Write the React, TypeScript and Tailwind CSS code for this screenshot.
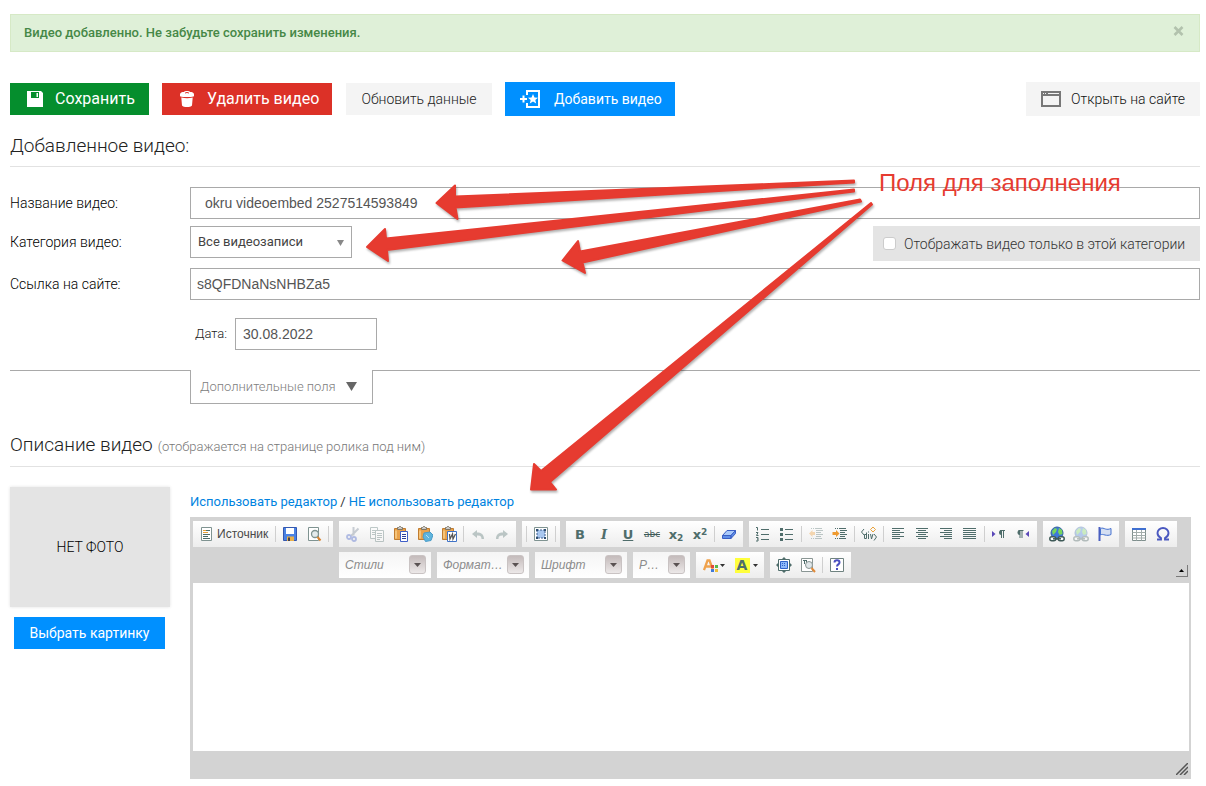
import React from "react";

const ink = "#4f6d6b";

type IconProps = { children: React.ReactNode; faded?: boolean };

function Icon({ children, faded }: IconProps) {
  return (
    <svg width="16" height="16" viewBox="0 0 16 16" fill="none" className={faded ? "opacity-35" : ""} aria-hidden="true">
      {children}
    </svg>
  );
}

function Tool({ label, children, faded }: { label: string } & IconProps) {
  return (
    <button type="button" aria-label={label} className="flex h-[22px] w-6 shrink-0 items-center justify-center">
      <Icon faded={faded}>{children}</Icon>
    </button>
  );
}

function Sep() {
  return (
    <span className="flex w-[5px] shrink-0 justify-center">
      <span className="h-4 w-px bg-[#cfcfcf]" />
    </span>
  );
}

function Group({ children }: { children: React.ReactNode }) {
  return (
    <div className="flex h-[26px] shrink-0 items-center bg-linear-to-b from-white to-[#ededed] px-[2px]">{children}</div>
  );
}

function Combo({ label, narrow }: { label: string; narrow?: boolean }) {
  return (
    <div className={`relative h-[26px] shrink-0 bg-linear-to-b from-[#f5f5f5] to-white ${narrow ? "w-[57px]" : "w-[92px]"}`}>
      <select
        aria-label={label}
        className={`h-full w-full appearance-none pl-[6px] font-['Liberation_Sans',sans-serif] text-[12px] text-ellipsis text-[#8c8c8c] italic ${narrow ? "pr-7" : "pr-6"}`}
      >
        <option>{label}</option>
      </select>
      <span className="pointer-events-none absolute top-[3px] right-[5px] flex h-[19px] w-[17px] items-center justify-center rounded-[3px] border border-[#c9c3c3] bg-linear-to-b from-[#c4bbbb] to-[#ece8e8]">
        <svg width="7" height="4" viewBox="0 0 7 4" aria-hidden="true">
          <path d="M0 0h7L3.5 4z" fill="#5a5252" />
        </svg>
      </span>
    </div>
  );
}

function Clipboard() {
  return (
    <>
      <path d="M1.5 2.5h11v11h-11z" fill="#e9a24a" stroke="#c07c30" />
      <path d="M3 4.500v8" stroke="#f9cf8b" strokeWidth="1.5" />
      <path d="M4.500 3.500v-2h1l1-1h1l1 1h1v2z" fill="#c8c8c8" stroke="#7f7460" />
    </>
  );
}

function Lines({ rows }: { rows: [number, number][] }) {
  return (
    <>
      {rows.map(([x, w], i) => (
        <path key={i} d={`M${x} ${2.5 + i * 2}h${w}`} stroke={ink} />
      ))}
    </>
  );
}

function Globe() {
  return (
    <>
      <circle cx="8" cy="7" r="6" fill="#3f78d8" stroke="#2f5f9f" />
      <path d="M3 5l3-3 2 1-1 3-3 3zM10 2l3 2 .5 4-3 1-1.5-3z" fill="#79d65c" />
      <rect x=".8" y="10.8" width="6" height="4" rx="2" fill="#fff" stroke="#3f5a58" strokeWidth="1.5" />
      <rect x="9.2" y="10.8" width="6" height="4" rx="2" fill="#fff" stroke="#3f5a58" strokeWidth="1.5" />
      <path d="M4 12.8h8" stroke="#3f5a58" strokeWidth="1.5" />
    </>
  );
}

function Caret() {
  return (
    <svg width="5" height="3" viewBox="0 0 5 3" aria-hidden="true">
      <path d="M0 0h5L2.5 3z" fill="#333" />
    </svg>
  );
}

const letter = "font-['DejaVu_Sans',sans-serif] leading-none font-bold text-[#4f6d6b]";

function TextTool({ label, className, children }: { label: string; className: string; children: React.ReactNode }) {
  return (
    <button type="button" aria-label={label} className={`flex h-[22px] w-6 shrink-0 items-center justify-center ${className}`}>
      {children}
    </button>
  );
}

function FirstRow() {
  return (
    <div className="flex gap-[6px]">
      <Group>
        <Tool label="Вырезать" faded>
          <path d="M8.5 1v8.5M13.5 2.5L6 10" stroke="#6d7b8d" strokeWidth="2" />
          <circle cx="4" cy="11" r="2" stroke="#3453c4" strokeWidth="1.8" />
          <circle cx="9" cy="13" r="2" stroke="#3453c4" strokeWidth="1.8" />
        </Tool>
        <Tool label="Копировать" faded>
          <path d="M1.5 1.5h7v11h-7z" fill="#fff" stroke={ink} />
          <path d="M3 4.5h4M3 6.5h4M3 8.5h4" stroke={ink} />
          <path d="M6.5 4.5h8v11h-8z" fill="#fff" stroke={ink} />
          <path d="M8 7.5h5M8 9.5h5M8 11.5h5M8 13.5h3" stroke={ink} />
        </Tool>
        <Tool label="Вставить">
          <Clipboard />
          <path d="M7.5 5.5h7v10h-7z" fill="#fff" stroke="#3f5fc8" />
          <path d="M9 8.5h4M9 10.5h4M9 12.5h4" stroke="#2d3f9a" />
        </Tool>
        <Tool label="Вставить текст">
          <Clipboard />
          <path d="M7 7l6-1 3 3-2 5.5-5.500 1L6 11z" fill="#5fb4dc" stroke="#4a9cc8" />
          <path d="M9 9l3 3" stroke="#b4e2f4" />
        </Tool>
        <Tool label="Вставить из Word">
          <Clipboard />
          <path d="M6.5 5.5h9v10h-9z" fill="#fff" stroke="#3f73c8" />
          <path d="M8.500 8l.5 5L11.500 8l.5 5L14.500 8" stroke="#555" strokeWidth="1.3" />
        </Tool>
        <Sep />
        <Tool label="Отменить" faded>
          <path d="M2 8l5-4v2.500c4 0 7 1.500 7 6.500h-2.500c0-3-1.500-3.500-4.500-3.500V12z" fill={ink} />
        </Tool>
        <Tool label="Повторить" faded>
          <path d="M14 8L9 4v2.500c-4 0-7 1.500-7 6.500h2.500c0-3 1.500-3.500 4.500-3.500V12z" fill={ink} />
        </Tool>
      </Group>
      <Group>
        <Sep />
        <Tool label="Выделить все">
          <path d="M1.5 1.5h13v13h-13z" fill="#fff" stroke="#7f9391" />
          <path d="M4 4h8v8H4z" fill="#a9c8f0" stroke="#3f5f8f" strokeDasharray="2 1" />
          <path d="M3 3h2v2H3zM11 3h2v2h-2zM3 11h2v2H3zM11 11h2v2h-2z" fill="#2f4f6f" />
        </Tool>
        <Sep />
      </Group>
      <Group>
        <TextTool label="Полужирный" className={`${letter} text-[13px]`}>B</TextTool>
        <TextTool label="Курсив" className="font-['DejaVu_Serif',serif] text-[13px] leading-none font-bold text-[#4f6d6b] italic">I</TextTool>
        <TextTool label="Подчеркнутый" className={`${letter} text-[13px] underline`}>U</TextTool>
        <TextTool label="Зачеркнутый" className="font-['DejaVu_Sans',sans-serif] text-[9px] leading-none font-normal text-[#3f5a58] line-through">abc</TextTool>
        <TextTool label="Подстрочный" className={`${letter} text-[13px]`}>
          <span>x</span>
          <span className="pt-2 text-[9px]">2</span>
        </TextTool>
        <TextTool label="Надстрочный" className={`${letter} text-[13px]`}>
          <span>x</span>
          <span className="pb-1 text-[9px]">2</span>
        </TextTool>
        <Sep />
        <Tool label="Убрать форматирование">
          <path d="M6 4.5h8.500L10 9.5H1.500z" fill="#a9c9fa" stroke="#3a5ec4" />
          <path d="M1.500 9.500H10v3H1.500zM10 9.500l4.500-5v3l-4.500 5z" fill="#5f8fe8" stroke="#3a5ec4" />
        </Tool>
      </Group>
      <Group>
        <Tool label="Нумерованный список">
          <path d="M1 1.5h1.500v3M1 6.5h2L1.500 9.500H3.500M1 11.500h2v1.500H2M3 13v2H1" stroke={ink} />
          <path d="M6 3.5h8M6 8.5h8M6 13.5h8" stroke={ink} />
        </Tool>
        <Tool label="Маркированный список">
          <path d="M1 2h3v3H1zM1 7h3v3H1zM1 12h3v3H1z" fill={ink} />
          <path d="M6 3.5h8M6 8.5h8M6 13.5h8" stroke={ink} />
        </Tool>
        <Sep />
        <Tool label="Уменьшить отступ" faded>
          <path d="M1 7.5L4.500 4v2H7v3H4.500v2z" fill="#ee9a2f" />
          <path d="M3 2.500h1m1 0h1m1 0h7M8 4.500h7M8 6.500h5M8 8.500h7M8 10.500h5M3 12.500h1m1 0h1m1 0h7" stroke={ink} />
        </Tool>
        <Tool label="Увеличить отступ">
          <path d="M7.500 7.500L4 4v2H.5v3H4v2z" fill="#ee9a2f" />
          <path d="M3 2.500h1m1 0h1m1 0h7M8 4.500h7M8 6.500h5M8 8.500h7M8 10.500h5M3 12.500h1m1 0h1m1 0h7" stroke={ink} />
        </Tool>
        <Sep />
        <Tool label="Контейнер div">
          <path d="M3 3L.5 6 3 9M5.500 6.500v6h-2v-4h2M7.500 8v5M7.500 5.500v1M9.500 8l1 5 1.500-5M13 8l2.500 3-2.500 3.500" stroke={ink} />
          <path d="M12 1l2.500 2.500L12 6 9.500 3.500z" stroke="#e9a23a" />
        </Tool>
        <Sep />
        <Tool label="По левому краю"><Lines rows={[[2, 12], [2, 8], [2, 12], [2, 8], [2, 12], [2, 8]]} /></Tool>
        <Tool label="По центру"><Lines rows={[[2, 12], [4, 8], [2, 12], [4, 8], [2, 12], [4, 8]]} /></Tool>
        <Tool label="По правому краю"><Lines rows={[[2, 12], [6, 8], [2, 12], [6, 8], [2, 12], [6, 8]]} /></Tool>
        <Tool label="По ширине"><Lines rows={[[1, 13], [1, 13], [1, 13], [1, 13], [1, 13], [1, 13]]} /></Tool>
        <Sep />
        <Tool label="Слева направо">
          <path d="M1 5l3.500 3L1 11z" fill="#5a48b8" />
          <path d="M14 4.500H9M10.500 4v8M12.500 4v8" stroke={ink} />
          <path d="M10.500 4a2.500 2.500 0 0 0 0 5z" fill={ink} />
        </Tool>
        <Tool label="Справа налево">
          <path d="M14 5l-3.500 3 3.500 3z" fill="#5a48b8" />
          <path d="M8.500 4.500h-5M5 4v8M7 4v8" stroke={ink} />
          <path d="M5 4a2.500 2.500 0 0 0 0 5z" fill={ink} />
        </Tool>
      </Group>
      <Group>
        <Tool label="Вставить ссылку"><Globe /></Tool>
        <Tool label="Убрать ссылку" faded><Globe /></Tool>
        <Tool label="Якорь">
          <path d="M2.500 1v14" stroke="#4a5fc0" strokeWidth="2" />
          <path d="M3.500 2.500c2-1 3 0 5 .5s3 .5 5.500-.5v6c-2 1-4 1-6 .5s-3-1-4.500 0z" fill="#d5dff2" stroke="#4672d0" />
        </Tool>
      </Group>
      <Group>
        <Tool label="Таблица">
          <path d="M1.500 2.500h13v12h-13z" fill="#fff" stroke="#7f8f8d" />
          <path d="M1.500 6.500h13M1.500 9.500h13M1.500 12h13M5.500 4v10.500M10.500 4v10.500" stroke="#a3adab" />
          <path d="M1 3h14" stroke="#3f6fd0" strokeWidth="2" />
        </Tool>
        <Tool label="Специальный символ">
          <path d="M2 13.500h4v-1.500C3 10.500 2.500 8.500 2.500 7a5.500 5 0 0 1 11 0c0 1.500-.5 3.500-3.500 5v1.500h4" stroke="#4a58c0" strokeWidth="1.9" />
        </Tool>
      </Group>
    </div>
  );
}

function SecondRow() {
  return (
    <div className="flex gap-[6px]">
      <Combo label="Стили" />
      <Combo label="Форматирование" />
      <Combo label="Шрифт" />
      <Combo label="Размер" narrow />
      <Group>
        <button type="button" aria-label="Цвет текста" className="flex w-8 items-center justify-center gap-px">
          <Icon>
            <path d="M1 13L4.500 3.500H6.500L10 13M3 9.500h5.500" stroke="#efa24c" strokeWidth="2.3" />
            <path d="M8 8h3v3H8z" fill="#e04a3a" />
            <path d="M12 8h3v3h-3z" fill="#58b848" />
            <path d="M8 12h3v3H8z" fill="#3f78d8" />
            <path d="M12 12h3v3h-3z" fill="#f0c03a" />
          </Icon>
          <Caret />
        </button>
        <button type="button" aria-label="Цвет фона" className="flex w-8 items-center justify-center gap-[3px]">
          <span className={`flex h-[15px] w-[15px] items-center justify-center bg-[#ffff3c] text-[14px] ${letter}`}>A</span>
          <Caret />
        </button>
      </Group>
      <Group>
        <Tool label="Развернуть">
          <path d="M8 0l3 3H5zM8 16l3-3H5zM0 8l3-3v6zM16 8l-3-3v6z" fill={ink} />
          <path d="M2.500 2.500h11v11h-11z" fill="#fff" stroke={ink} />
          <path d="M4.500 4.500h7v7h-7z" fill="#8db8f8" stroke="#2f62c8" />
          <path d="M6 6.500h4M6 8.500h4" stroke="#2f62c8" strokeDasharray="1 1" />
        </Tool>
        <Tool label="Отображать блоки">
          <path d="M1.500 1.500h11v13h-11z" fill="#fff" stroke="#8a9694" />
          <path d="M3 3.500h4M4.500 3v4M6.500 3v4" stroke={ink} />
          <circle cx="9" cy="8" r="3.5" fill="#dfe6e8" stroke="#8a9694" />
          <path d="M11.500 11l3.500 4" stroke="#e08a3a" strokeWidth="2" />
        </Tool>
        <Sep />
        <Tool label="О редакторе">
          <path d="M1.500 1.500h13v13h-13z" fill="#fff" stroke="#6f8280" />
          <path d="M5.500 5.500c0-3 5-3 5 0 0 2-2.500 1.800-2.500 4M8 11v2" stroke="#4a4fc0" strokeWidth="2" />
        </Tool>
      </Group>
    </div>
  );
}

function Editor() {
  return (
    <div className="mr-[9px] bg-[#d3d3d3] pr-[2px] pl-[3px]">
      <div className="relative flex gap-[6px] pt-1 pb-[5px]">
        <Group>
          <button
            type="button"
            className="flex w-[78px] items-center gap-[2px] pl-1 font-['Liberation_Sans',sans-serif] text-[12px] font-normal text-[#484848]"
          >
            <Icon>
              <path d="M2.500 1.500h10v13h-10z" fill="#fff" stroke="#7f9391" />
              <path d="M4 4.500h3M4 6.500h5" stroke="#e9a23a" />
              <path d="M4 8.500h7M4 10.500h5M4 12.500h7M7 4.500h4" stroke={ink} />
            </Icon>
            Источник
          </button>
          <Sep />
          <Tool label="Сохранить текст">
            <path d="M1.500 1.500h13v13h-13z" fill="#4a82e4" stroke="#3458b0" />
            <path d="M4 2h8v6H4z" fill="#fff" />
            <path d="M5 10.500h7V15H5z" fill="#e9b04a" />
            <path d="M6 11.500h2V15H6z" fill="#3f3f4f" />
          </Tool>
          <Tool label="Предварительный просмотр">
            <path d="M2.500 1.500h10v13h-10z" fill="#fff" stroke="#7f9391" />
            <circle cx="9" cy="8" r="3.5" fill="#e4ebec" stroke="#7f9391" strokeWidth="1.3" />
            <path d="M11.500 11l3 3.500" stroke="#d9832f" strokeWidth="2" />
          </Tool>
          <Sep />
        </Group>
        <div className="flex flex-col gap-[5px]">
          <FirstRow />
          <SecondRow />
        </div>
        <button
          type="button"
          aria-label="Свернуть панель инструментов"
          className="absolute right-px bottom-[6px] flex h-3 w-3 items-center justify-center border-r border-b border-[#7a7a7a]"
        >
          <svg width="5" height="3" viewBox="0 0 5 3" aria-hidden="true">
            <path d="M0 3h5L2.5 0z" fill="#000" />
          </svg>
        </button>
      </div>
      <textarea aria-label="Описание видео" className="block h-[168px] w-full resize-none bg-white p-2 text-sm outline-none" />
      <div className="flex h-7 items-end justify-end pr-px pb-1">
        <svg width="12" height="12" viewBox="0 0 12 12" aria-hidden="true">
          <path d="M0 12L12 0M4 12l8-8M8 12l4-4" stroke="#555" strokeWidth="1.5" />
        </svg>
      </div>
    </div>
  );
}

function Annotations() {
  return (
    <>
      <svg
        width="900"
        height="520"
        viewBox="0 0 900 520"
        className="pointer-events-none absolute top-0 left-0 drop-shadow-[1px_2px_1px_rgba(0,0,0,0.3)]"
        aria-hidden="true"
      >
        <g fill="#e63b30" stroke="#e63b30" strokeWidth="2" strokeLinejoin="round">
          <path d="M436.500 203L455 185.500L455 196.500L854 180.500L854 182.500L455.500 207.500L457.500 219Z" />
          <path d="M367 247L385 229L386 238.500L854 189.500L854 191.500L387 250L388 261Z" />
          <path d="M562.500 260.500L578 241L580 251.500L860 199.500L861 201.500L582.500 262.500L585 273Z" />
          <path d="M531 489.500L534 464L541 471L871 203L872 204.500L550 482L556 489.500Z" />
        </g>
      </svg>
      <p className="pointer-events-none absolute top-[168px] left-[879px] font-['Liberation_Sans',sans-serif] text-[24px] leading-[30px] whitespace-nowrap text-[#e63b30]">
        Поля для заполнения
      </p>
    </>
  );
}

const field = "h-8 border border-[#a9a9a9] bg-white font-['Liberation_Sans',sans-serif] text-[14px] font-normal text-[#555] outline-none";

export default function App() {
  return (
    <main className="relative bg-white pt-[14px] pr-[6px] pb-2 pl-[10px] font-['Roboto',sans-serif] text-[14px] leading-5 font-light text-black">
      <div role="alert" className="flex h-[38px] items-center justify-between border border-[#d6e9c6] bg-[#dff0d8] pr-[15px] pl-[13px] text-[13px] font-medium text-[#468847]">
        <span>Видео добавленно. Не забудьте сохранить изменения.</span>
        <button type="button" aria-label="Закрыть" className="pb-1">
          <svg width="11" height="10" viewBox="0 0 11 10" aria-hidden="true">
            <path d="M1.500 1l8 8M9.500 1l-8 8" stroke="#b2c2ad" strokeWidth="2.6" />
          </svg>
        </button>
      </div>

      <div className="mt-[30px] flex items-center">
        <button type="button" className="flex h-8 w-[139px] items-center bg-[#058e2d] pl-[17px] text-[16px] font-normal text-white">
          <svg width="16" height="16" viewBox="0 0 16 16" className="mr-3" aria-hidden="true">
            <path d="M0 0h14l2 2v14H0zM4 1v6h8V1zM9.500 2H11v4H9.500z" fill="#fff" fillRule="evenodd" />
          </svg>
          Сохранить
        </button>
        <button type="button" className="ml-[13px] flex h-8 w-[170px] items-center bg-[#dc3127] pl-[17px] text-[16px] font-normal text-white">
          <svg width="16" height="16" viewBox="0 0 16 16" className="mr-3" aria-hidden="true">
            <path d="M1 3.500C1 1.500 3 1 5 1c.5-1.300 5.500-1.300 6 0 2 0 4 .5 4 2.500v1.700c-4 1.200-10 1.200-14 0zM2.300 6.500c4 1 7.500 1 11.400 0L13 14.500c-1.500 2-8.500 2-10 0z" fill="#fff" />
            <path d="M6 2.200c1-.9 3-.9 4 0" stroke="#dc3127" fill="none" />
          </svg>
          Удалить видео
        </button>
        <button type="button" className="ml-[14px] h-8 w-[146px] bg-[#f4f4f4] text-[#222]">Обновить данные</button>
        <button type="button" className="ml-[13px] flex h-[34px] w-[170px] items-center bg-[#0090ff] pl-[15px] font-normal text-white">
          <svg width="20" height="18" viewBox="0 0 20 18" className="mr-[14px]" aria-hidden="true">
            <path d="M7 5V1h12v16H7v-4" fill="none" stroke="#fff" strokeWidth="2" />
            <path d="M0 9h7M3.500 5.500v7" stroke="#fff" strokeWidth="2" />
            <path d="M13 4l1.500 3.500 3.500.2-2.700 2.300.9 3.500L13 11.600l-3.200 1.900.9-3.500L8 7.700l3.500-.2z" fill="#fff" />
          </svg>
          Добавить видео
        </button>
        <a href="#site" className="ml-auto flex h-[34px] w-[174px] items-center bg-[#f4f4f4] pl-[15px] text-[#111]">
          <svg width="20" height="16" viewBox="0 0 20 16" className="mr-[10px]" aria-hidden="true">
            <path d="M1 1h18v14H1z" fill="#f4f4f4" stroke="#777" strokeWidth="2" />
            <path d="M1 3.500h18" stroke="#777" strokeWidth="3" />
            <path d="M2 2.500h4" stroke="#f4f4f4" strokeDasharray="1 1" />
            <path d="M7 2.500h11" stroke="#f4f4f4" />
          </svg>
          Открыть на сайте
        </a>
      </div>

      <h1 className="flex h-[51px] items-center border-b border-[#e2e2e2] pt-[10px] text-[19px] text-[#222]">Добавленное видео:</h1>

      <form>
        <div className="mt-5 flex items-center">
          <label htmlFor="name" className="w-[180px] shrink-0">Название видео:</label>
          <input id="name" className={`${field} min-w-0 flex-1 pr-[7px] pl-[14px]`} defaultValue="okru videoembed 2527514593849" />
        </div>
        <div className="mt-[7px] flex">
          <label htmlFor="category" className="flex h-8 w-[180px] shrink-0 items-center">Категория видео:</label>
          <div className="relative h-8 w-[162px]">
            <select id="category" className="h-full w-full appearance-none border border-[#a9a9a9] bg-white pl-[7px] text-[13px] font-normal text-[#444]">
              <option>Все видеозаписи</option>
            </select>
            <svg width="7" height="6" viewBox="0 0 7 6" className="pointer-events-none absolute top-[14px] right-2" aria-hidden="true">
              <path d="M0 0h7L3.5 6z" fill="#888" />
            </svg>
          </div>
          <label className="ml-auto flex h-[35px] w-[327px] items-center gap-2 bg-[#e4e4e4] pl-[10px] text-[#333]">
            <input type="checkbox" className="h-[13px] w-[13px] shrink-0 appearance-none rounded-[3px] border border-[#ccc] bg-white" />
            <span className="whitespace-nowrap">Отображать видео только в этой категории</span>
          </label>
        </div>
        <div className="mt-[7px] flex items-center">
          <label htmlFor="link" className="w-[180px] shrink-0">Ссылка на сайте:</label>
          <input id="link" className={`${field} min-w-0 flex-1 px-[6px]`} defaultValue="s8QFDNaNsNHBZa5" />
        </div>
        <div className="mt-[18px] ml-[185px] flex items-center">
          <label htmlFor="date" className="w-10 text-[13px] text-[#222]">Дата:</label>
          <input id="date" className={`${field} w-[142px] px-[7px]`} defaultValue="30.08.2022" />
        </div>
        <div className="mt-5 flex">
          <span className="w-[180px] border-t border-[#a9a9a9]" />
          <button type="button" className="flex h-[34px] w-[183px] items-center justify-between border-x border-b border-[#a9a9a9] pr-[15px] pl-[9px] text-[13px] whitespace-nowrap text-[#808080]">
            Дополнительные поля
            <svg width="11" height="9" viewBox="0 0 11 9" aria-hidden="true">
              <path d="M0 0h11L5.5 9z" fill="#666" />
            </svg>
          </button>
          <span className="flex-1 border-t border-[#a9a9a9]" />
        </div>
      </form>

      <h2 className="flex h-[63px] items-center gap-[5px] border-b border-[#e2e2e2] pt-5 text-[19px] text-[#222]">
        Описание видео
        <small className="pt-1 text-[13px] text-[#777]">(отображается на странице ролика под ним)</small>
      </h2>

      <div className="mt-5 flex gap-5">
        <div className="w-40 shrink-0">
          <div className="flex h-[120px] items-center justify-center bg-[#e4e4e4] shadow-[0_0_3px_rgba(0,0,0,0.12)]">НЕТ ФОТО</div>
          <button type="button" className="mt-[10px] ml-1 h-8 w-[151px] bg-[#0090ff] font-normal text-white">Выбрать картинку</button>
        </div>
        <div className="min-w-0 flex-1">
          <p className="flex h-[30px] items-center gap-[3px] text-[13px] font-normal text-[#333]">
            <a href="#editor" className="text-[#0083e0]">Использовать редактор</a>/
            <a href="#plain" className="text-[#0083e0]">НЕ использовать редактор</a>
          </p>
          <Editor />
        </div>
      </div>

      <Annotations />
    </main>
  );
}
